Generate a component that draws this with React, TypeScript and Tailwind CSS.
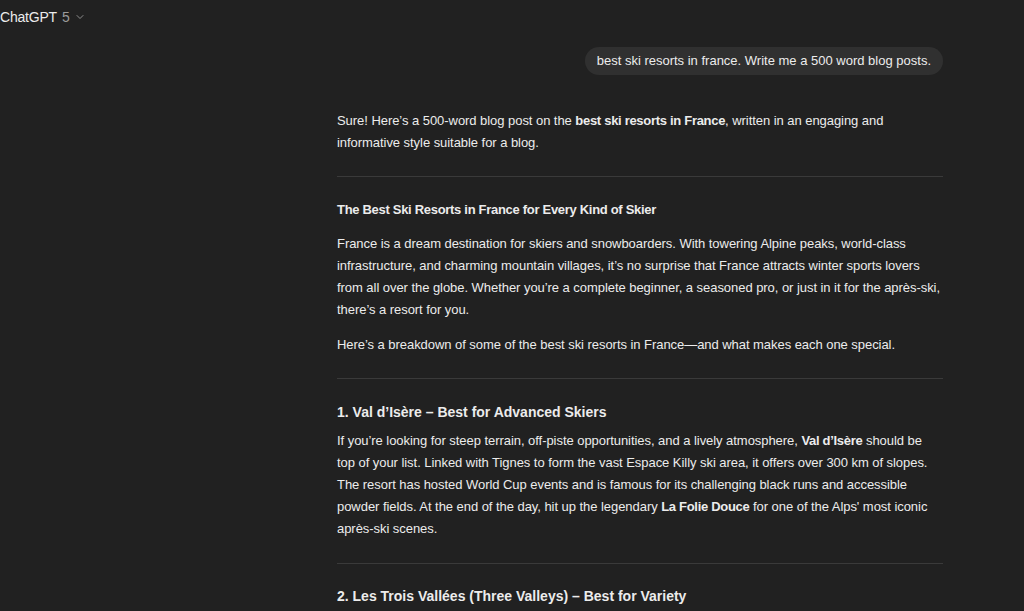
import { ChevronDown } from "lucide-react";

export default function App() {
  return (
    <div
      className="h-[611px] w-[1024px] overflow-hidden bg-[#212121] text-[#ececec]"
      style={{ fontFamily: "'Liberation Sans', Arial, sans-serif" }}
    >
      {/* Top bar */}
      <div className="flex h-[34px] items-center">
        <span className="text-[14px] tracking-[-0.2px] text-[#ececec]">ChatGPT</span>
        <span className="ml-[5px] text-[14px] text-[#9b9b9b]">5</span>
        <ChevronDown className="ml-[4px] h-3 w-3 text-[#9b9b9b]" strokeWidth={1.75} />
      </div>

      <div className="ml-[337px] w-[606px] text-[13px] leading-[22px] tracking-[-0.05px]">
        {/* User message */}
        <div className="mt-[13px] flex justify-end">
          <div className="flex h-[28px] items-center rounded-full bg-[#303030] px-3 text-[13px] tracking-normal">
            best ski resorts in france. Write me a 500 word blog posts.
          </div>
        </div>

        {/* Assistant response */}
        <p className="mt-[35px]">
          Sure! Here’s a 500-word blog post on the <strong className="font-semibold tracking-[-0.3px]">best ski resorts in France</strong>, written in an engaging and informative style suitable for a blog.
        </p>

        <hr className="mt-[22px] border-[#3a3a3a]" />

        <p className="mt-[22px] font-semibold tracking-[-0.3px]">The Best Ski Resorts in France for Every Kind of Skier</p>

        <p className="mt-[12px]">
          France is a dream destination for skiers and snowboarders. With towering Alpine peaks, world-class infrastructure, and charming mountain villages, it’s no surprise that France attracts winter sports lovers from all over the globe. Whether you’re a complete beginner, a seasoned pro, or just in it for the après-ski, there’s a resort for you.
        </p>

        <p className="mt-[13px]">Here’s a breakdown of some of the best ski resorts in France—and what makes each one special.</p>

        <hr className="mt-[22px] border-[#3a3a3a]" />

        <h3 className="mt-[21px] text-[14px] font-semibold leading-[24px] tracking-normal">1. Val d’Isère – Best for Advanced Skiers</h3>

        <p className="mt-[6px]">
          If you’re looking for steep terrain, off-piste opportunities, and a lively atmosphere, <strong className="font-semibold tracking-[-0.3px]">Val d’Isère</strong> should be top of your list. Linked with Tignes to form the vast Espace Killy ski area, it offers over 300 km of slopes. The resort has hosted World Cup events and is famous for its challenging black runs and accessible powder fields. At the end of the day, hit up the legendary <strong className="font-semibold tracking-[-0.3px]">La Folie Douce</strong> for one of the Alps' most iconic après-ski scenes.
        </p>

        <hr className="mt-[23px] border-[#3a3a3a]" />

        <h3 className="mt-[20px] text-[14px] font-semibold leading-[24px] tracking-normal">2. Les Trois Vallées (Three Valleys) – Best for Variety</h3>
      </div>
    </div>
  );
}
